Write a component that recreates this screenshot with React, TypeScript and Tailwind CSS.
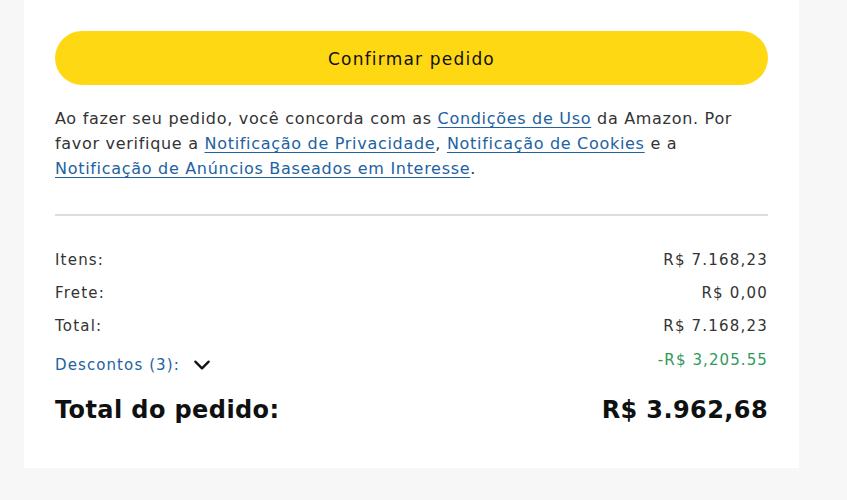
import React from 'react';

const linkCls = 'text-[#2162a1] underline underline-offset-[3px] decoration-[#2162a1]';

function Row({ label, value }: { label: string; value: string }) {
    return (
        <div className="flex items-center justify-between h-[33px] text-[15px] tracking-[1.2px] text-[#333]">
            <span>{label}</span>
            <span>{value}</span>
        </div>
    );
}

export default function App() {
    return (
        <div className="min-h-[500px] w-full bg-[#f7f7f7] font-['DejaVu_Sans',sans-serif]">
            <div className="ml-[24px] w-[775px] h-[468px] bg-white px-[31px] pt-[31px]">
                {/* Confirm button */}
                <button className="w-full h-[54px] pt-[4px] rounded-full bg-[#ffd814] text-[#0f1111] text-[17px] tracking-[1.2px]">
                    Confirmar pedido
                </button>

                {/* Legal text */}
                <p className="mt-[21px] text-[16px] leading-[25px] text-[#333] tracking-[0.7px] whitespace-nowrap">
                    Ao fazer seu pedido, você concorda com as <a className={linkCls}>Condições de Uso</a> da Amazon. Por
                    <br />
                    favor verifique a <a className={linkCls}>Notificação de Privacidade</a>,{' '}
                    <a className={linkCls}>Notificação de Cookies</a> e a
                    <br />
                    <a className={linkCls}>Notificação de Anúncios Baseados em Interesse</a>.
                </p>

                <div className="mt-[33px] h-[2px] bg-[#dddddd]" />

                {/* Summary */}
                <div className="mt-[28px]">
                    <Row label="Itens:" value="R$ 7.168,23" />
                    <Row label="Frete:" value="R$ 0,00" />
                    <Row label="Total:" value="R$ 7.168,23" />
                    <div className="flex items-start justify-between h-[36px] pt-[11px] text-[15px] tracking-[1.1px]">
                        <span className="flex items-center gap-[12px] text-[#2162a1]">
                            Descontos (3):
                            <svg width="20" height="20" viewBox="0 0 24 24" fill="none" stroke="#111" strokeWidth="2.8" strokeLinecap="round" strokeLinejoin="round">
                                <path d="M4 8l8 8 8-8" />
                            </svg>
                        </span>
                        <span className="text-[#2e9a5a] -mt-[5px]">-R$ 3,205.55</span>
                    </div>
                </div>

                <div className="flex items-center justify-between mt-[13px] text-[24px] font-bold tracking-[0.4px] text-[#0f1111]">
                    <span>Total do pedido:</span>
                    <span>R$ 3.962,68</span>
                </div>
            </div>
        </div>
    );
}
